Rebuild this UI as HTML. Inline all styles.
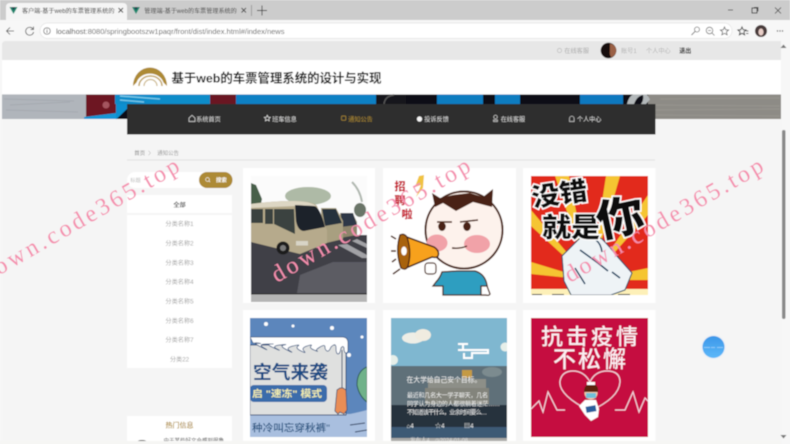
<!DOCTYPE html>
<html lang="zh"><head><meta charset="utf-8"><title>基于web的车票管理系统</title>
<style>
html,body{margin:0;padding:0;width:790px;height:444px;overflow:hidden;background:#f7f7f7}
svg{position:absolute;left:0;top:0;display:block}
text{font-family:"Liberation Sans","Noto Sans CJK SC",sans-serif}
.b{font-weight:700}
</style></head><body>
<svg width="790" height="444" viewBox="0 0 790 444" xmlns="http://www.w3.org/2000/svg">
<defs><filter id="bl" x="-5%" y="-5%" width="110%" height="110%"><feGaussianBlur stdDeviation="0.42"/></filter>
<linearGradient id="ball" x1="0" y1="0" x2="0" y2="1"><stop offset="0" stop-color="#3c97e8"/><stop offset="1" stop-color="#5cb8fa"/></linearGradient>
<clipPath id="c1"><rect x="251" y="176" width="116" height="126"/></clipPath>
<clipPath id="c3"><rect x="531" y="176" width="117" height="119"/></clipPath>
<clipPath id="c4"><rect x="250" y="318" width="117" height="119"/></clipPath>
<clipPath id="c5"><rect x="391" y="318" width="116" height="123"/></clipPath>
<clipPath id="c6"><rect x="531" y="318" width="117" height="119"/></clipPath>
<clipPath id="t1"><rect x="20" y="3" width="95" height="17"/></clipPath>
<clipPath id="t2"><rect x="142" y="3" width="95" height="17"/></clipPath>
</defs>
<g filter="url(#bl)">
<!-- browser chrome -->
<rect width="790" height="444" fill="#f7f7f7"/>
<rect width="790" height="20" fill="#cccccc"/>
<path d="M6 20V7q0-4 4-4h113q4 0 4 4v13z" fill="#f5f5f5"/>
<path d="M9.500 7h8l-4 7z" fill="#1f8a70"/><path d="M11.500 7h4l-2 3.500z" fill="#26424f"/>
<text x="22" y="12.800" font-size="6.100" fill="#333" clip-path="url(#t1)">客户端-基于web的车票管理系统的设计</text>
<path d="M118.500 8l4.500 4.500m0-4.500l-4.500 4.500" stroke="#333" stroke-width=".9"/>
<path d="M132 7h8l-4 7z" fill="#1f8a70"/><path d="M134 7h4l-2 3.500z" fill="#26424f"/>
<text x="144.300" y="12.800" font-size="6.100" fill="#444" clip-path="url(#t2)">管理端-基于web的车票管理系统的设计</text>
<path d="M241.500 8l4.500 4.500m0-4.500l-4.500 4.500" stroke="#444" stroke-width=".9"/>
<path d="M251.500 5v11" stroke="#888" stroke-width=".7"/>
<path d="M257 10.500h10M262 5.500v10" stroke="#444" stroke-width=".9"/>
<path d="M728 10h5" stroke="#444" stroke-width=".8"/>
<rect x="752" y="8" width="5" height="5" fill="none" stroke="#333" stroke-width=".9"/><path d="M754 7.500h4v4" fill="none" stroke="#333" stroke-width=".7"/>
<path d="M775 7.500l6 6m0-6l-6 6" stroke="#444" stroke-width=".8"/>
<path d="M14 31h-7m3-3.500l-3.500 3.500 3.500 3.500" fill="none" stroke="#555" stroke-width=".8"/>
<path d="M33 29a4 4 0 1 0 .6 3M33.500 26.500v3h-3" fill="none" stroke="#555" stroke-width=".8"/>
<rect x="40" y="23" width="692" height="15.500" rx="7.700" fill="#fff" stroke="#e4e4e4" stroke-width=".7"/>
<circle cx="47" cy="31" r="3.300" fill="none" stroke="#555" stroke-width=".7"/><path d="M47 30v3M47 28.800v.7" stroke="#555" stroke-width=".7"/>
<text x="56" y="33.800" font-size="7.500" fill="#666"><tspan fill="#444">localhost</tspan>:8080/springbootszw1paqr/front/dist/index.html#/index/news</text>
<circle cx="697" cy="29.500" r="2.500" fill="none" stroke="#777" stroke-width=".8"/><path d="M695.200 31.300l-3.700 3.700" stroke="#777" stroke-width=".9"/>
<circle cx="709.500" cy="30.500" r="3.300" fill="none" stroke="#777" stroke-width=".8"/><path d="M712 33l2.500 2.500M708 30.500h3" stroke="#777" stroke-width=".8"/>
<path d="M724.500 27l1.200 2.700 2.900.3-2.200 1.900.7 2.900-2.600-1.500-2.600 1.500.7-2.900-2.200-1.900 2.900-.3z" fill="none" stroke="#666" stroke-width=".8"/>
<path d="M742 27l1.200 2.700 2.900.3-2.200 1.900.7 2.900-2.600-1.500-2.600 1.500.7-2.900-2.200-1.900 2.900-.3z" fill="none" stroke="#333" stroke-width=".9"/><path d="M746 31h2.500M746 33.500h2.500" stroke="#333" stroke-width=".7"/>
<circle cx="761" cy="31" r="6" fill="#4a3a3a"/><ellipse cx="761" cy="32" rx="2.500" ry="3.500" fill="#e9cfc8"/>
<circle cx="777.500" cy="31" r=".7" fill="#555"/><circle cx="780" cy="31" r=".7" fill="#555"/><circle cx="782.500" cy="31" r=".7" fill="#555"/>

<!-- page -->
<path d="M2 444V45q0-4 4-4h775v403z" fill="#f5f5f5"/>
<path d="M2 60V45q0-4 4-4h775v19z" fill="#e7e7e7"/>
<rect x="2" y="60" width="779" height="34" fill="#fff"/>
<circle cx="559.500" cy="50.500" r="2.100" fill="none" stroke="#bbb" stroke-width=".7"/>
<text x="564.300" y="52.800" font-size="6.200" fill="#aaa">在线客服</text>
<circle cx="608.500" cy="50.500" r="7.800" fill="#120a08"/><path d="M610 43.500q6.500 1.500 6.300 7.500 0 4-5 6.500-2-3-1.500-6z" fill="#9a6044"/>
<text x="621" y="52.800" font-size="6.200" fill="#b5b5b5">账号1</text>
<text x="646" y="52.800" font-size="6.200" fill="#b5b5b5">个人中心</text>
<text x="679.300" y="52.800" font-size="6" fill="#222" class="b">退出</text>
<!-- logo -->
<path d="M133 86A17 18.500 0 0 1 167 86L163.500 82.500A14 12 0 0 0 136.500 82.500z" fill="#ad8a35"/>
<path d="M139 86a11.500 10 0 0 1 23 0" fill="none" stroke="#c2a565" stroke-width="1.500"/>
<path d="M144 86a6.500 6.500 0 0 1 13 0" fill="none" stroke="#cdb98c" stroke-width="1.200"/>
<text x="171.500" y="82.500" font-size="12.400" fill="#1a1a1a" font-weight="700">基于web的车票管理系统的设计与实现</text>

<!-- banner -->
<rect x="2" y="94.500" width="779" height="24.500" fill="#0a0d12"/>
<rect x="2" y="94.500" width="84" height="24.500" fill="#b0b5bb"/>
<path d="M4 99l70 2M10 105l60-3M6 110l72 2" stroke="#8e949c" stroke-width="1" opacity=".35"/>
<rect x="86" y="94.500" width="30" height="24" fill="#6d1620"/><circle cx="106" cy="105" r="3.500" fill="#a4555e"/>
<path d="M116 94.500h26l-26 25z" fill="#0f8fcf"/><path d="M84 117l32-4v6H84z" fill="#1496d6"/>
<rect x="115" y="94.500" width="95" height="9.500" fill="#0f8cc9"/>
<path d="M120 96l40 3M120 100l24 2" stroke="#7fcdeb" stroke-width="1.200"/>
<rect x="210" y="94.500" width="26" height="9.500" fill="#6b1520"/>
<rect x="236" y="94.500" width="140" height="9.500" fill="#0f80c4"/>
<rect x="376" y="94.500" width="30" height="9.500" fill="#15171c"/><path d="M384 104q1-8 10-9" fill="none" stroke="#555" stroke-width="1.500"/>
<rect x="437" y="94.500" width="46" height="9.500" fill="#0f7cc0"/>
<rect x="495" y="94.500" width="25" height="9.500" fill="#0f7cc0"/>
<rect x="580" y="94.500" width="43" height="9.500" fill="#0f78bf"/>
<rect x="648" y="94.500" width="133" height="24.500" fill="#8d8b86"/>
<path d="M627 104q2-8 6-9.500h14l3 5-4 4.500h-5q3-4 2-9-6 1-9 9z" fill="#b3b8ba"/>
<path d="M660 99l120-1M655 105l125 1M655 110l125-1M655 115l125 1" stroke="#a5a39e" stroke-width="1" opacity=".4"/>

<!-- nav -->
<rect x="127" y="104" width="528.500" height="30.500" fill="#2f2f2d"/>
<g font-size="6.100">
<path d="M189 121.500v-3.500l3-2.700 3 2.700v3.500z" fill="none" stroke="#ddd" stroke-width=".7"/>
<text x="196.300" y="121.300" fill="#dedede">系统首页</text>
<path d="M267.300 115.300l.9 1.900 2.100.2-1.500 1.400.4 2-1.900-1-1.900 1 .4-2-1.500-1.400 2.100-.2z" fill="none" stroke="#ddd" stroke-width=".7"/>
<text x="272.300" y="121.300" fill="#dedede">班车信息</text>
<rect x="341.500" y="116" width="4.300" height="4.300" rx=".8" fill="none" stroke="#ad8a35" stroke-width=".7"/>
<text x="348.300" y="121.300" fill="#ad8a35">通知公告</text>
<circle cx="419.500" cy="119" r="2.600" fill="#f5f5f5"/>
<text x="424.300" y="121.300" fill="#dedede">投诉反馈</text>
<circle cx="495.500" cy="117" r="1.800" fill="none" stroke="#ccc" stroke-width=".7"/><path d="M493.500 121.500v-1.500h4v1.500z" fill="none" stroke="#ccc" stroke-width=".7"/>
<text x="500.700" y="121.300" fill="#dedede">在线客服</text>
<path d="M569.500 121.500v-3a2.300 2.300 0 0 1 4.600 0v3z" fill="none" stroke="#ccc" stroke-width=".7"/>
<text x="577" y="121.300" fill="#dedede">个人中心</text>
</g>

<!-- breadcrumb -->
<text x="134.300" y="154.800" font-size="5.400" fill="#888">首页</text>
<path d="M148.500 150.800l2 2.200-2 2.200" fill="none" stroke="#999" stroke-width=".5"/>
<text x="157.300" y="154.800" font-size="5.400" fill="#999">通知公告</text>
<rect x="127" y="159.500" width="528" height="1" fill="#e2e2e2"/>

<!-- sidebar -->
<rect x="127" y="172" width="105" height="16" rx="8" fill="#fff"/>
<text x="130.300" y="181.800" font-size="5.200" fill="#bbb">标题</text>
<rect x="199" y="172" width="33.500" height="16" rx="8" fill="#ad8a35"/>
<circle cx="207.500" cy="179.500" r="1.900" fill="none" stroke="#fff" stroke-width=".6"/><path d="M209 181l1 1" stroke="#fff" stroke-width=".6"/>
<text x="216" y="181.800" font-size="5.400" fill="#fff" class="b">搜索</text>
<rect x="127" y="195" width="105" height="18" fill="#fff"/>
<text x="179.500" y="206.800" font-size="6.200" fill="#333" text-anchor="middle" font-weight="500">全部</text>
<rect x="127" y="215" width="105" height="153" fill="#fff"/>
<g font-size="6.200" fill="#a3a3a3" text-anchor="middle">
<text x="179.500" y="226">分类名称1</text><text x="179.500" y="245.500">分类名称2</text><text x="179.500" y="264.800">分类名称3</text><text x="179.500" y="284.200">分类名称4</text><text x="179.500" y="303.500">分类名称5</text><text x="179.500" y="322.800">分类名称6</text><text x="179.500" y="342.200">分类名称7</text><text x="179.500" y="361.500">分类22</text>
</g>
<rect x="127" y="416" width="105" height="25" fill="#fff"/>
<text x="179.500" y="427.500" font-size="7" fill="#ad8a35" text-anchor="middle" font-weight="500">热门信息</text>
<text x="163.500" y="442.500" font-size="5.500" fill="#444">由于某些好文会感到很鲁</text>
<ellipse cx="142" cy="442" rx="5" ry="2" fill="#444"/>

<!-- cards -->
<g fill="#fff">
<rect x="243" y="168" width="132" height="135"/><rect x="383" y="168" width="133" height="135"/><rect x="523" y="168" width="132.500" height="135"/>
<rect x="243" y="310" width="132" height="131"/><rect x="383" y="310" width="133" height="131"/><rect x="523" y="310" width="132.500" height="131"/>
</g>

<!-- card 1: bus -->
<g clip-path="url(#c1)">
<rect x="251" y="176" width="116" height="126" fill="#fbfbfb"/>
<path d="M251 183l5 2 6 14-2 9h-9z" fill="#465f48"/>
<ellipse cx="308" cy="196" rx="23" ry="9" fill="#aebaa6"/>
<path d="M352 182q8 8 10 20" fill="none" stroke="#b0b8b0" stroke-width="2"/><ellipse cx="360" cy="210" rx="6" ry="7" fill="#6a7468"/>
<rect x="251" y="235" width="116" height="58.500" fill="#414147"/>
<path d="M297 293l3-18 33-13h34v31z" fill="#5c5c64"/>
<path d="M338 245l24 13h5v-3l-20-11zM352 241l15 7v-4l-10-5z" fill="#a2a2a6"/>
<path d="M340 213h13l1 3 3 6v13l-17 3z" fill="#8f866c"/><path d="M341 213h12l4 12-16 2z" fill="#2d3947"/>
<path d="M321 208h15l7 13v18l-21 5z" fill="#a89f80"/><path d="M322 209h14l6 14-17 3z" fill="#28313c"/>
<path d="M251 204q20-3 42-3 20 0 24 5l10 24v13l-27 11-49-12z" fill="#b6aa8c"/>
<path d="M251 204q22-3 42-3 18 0 23 5l-20 0-45 2z" fill="#ddd6c3"/>
<path d="M251 209h12v14h-12zM265 209h8v15h-8zM274 209h20l1 25-21-10z" fill="#3a423f"/>
<path d="M295 205l19 1q6 1 11 21l-21 4q-6 0-8-10z" fill="#1c232c"/>
<circle cx="283" cy="248" r="6.500" fill="#1b1b1d"/><circle cx="283" cy="248" r="3" fill="#7a7a7a"/>
<rect x="296" y="241" width="12" height="4.500" fill="#d8d4c6"/>
<rect x="251" y="293.500" width="116" height="1" fill="#222"/>
<rect x="251" y="294.500" width="116" height="7.500" fill="#b5b5b5"/>
</g>

<!-- card 2: cartoon -->
<g>
<g fill="#c6192b" font-weight="900" text-anchor="middle">
<text x="400" y="190" font-size="11">招</text><text x="400" y="204" font-size="11">聘</text><text x="407" y="218" font-size="11">啦</text>
</g>
<path d="M419 176l5-1-1 13-7 9 5-12-6 2z" fill="#f0c341"/>
<circle cx="464" cy="230" r="38.500" fill="#fdf2ec" stroke="#4a2412" stroke-width="2"/>
<path d="M432 193l8 5 13-3 17-2 13 4 10-8-1 18-19-5-17 9-13-8-8 4z" fill="#4a2412"/>
<ellipse cx="437" cy="243" rx="10.500" ry="8.500" fill="#f1a2a8"/>
<ellipse cx="477" cy="244" rx="13" ry="9" fill="#f1a2a8"/>
<path d="M437 222h15M460 222l18-2" stroke="#4a2412" stroke-width="1.600"/>
<ellipse cx="442" cy="226.500" rx="3.800" ry="4.500" fill="#4a2412"/><ellipse cx="467" cy="226.500" rx="3.800" ry="4.500" fill="#4a2412"/>
<path d="M452 248q8 1 15-2" fill="none" stroke="#4a2412" stroke-width="1.400"/>
<path d="M442 272q-2 6-6 10l-3 4 10 0 0 9h45l-1-10q-2-11-12-14l-18 0z" fill="#2f9ec0" stroke="#4a2412" stroke-width="1.300"/>
<path d="M481 295v-9h6l3 8q-1 2-4 1z" fill="#fff" stroke="#4a2412" stroke-width="1.300"/>
<path d="M404 236l30 11q6 4 4 9-1 2-6 1l-26 11z" fill="#f7a11e" stroke="#4a2412" stroke-width="1.500"/>
<path d="M400 235q-5 16 1 33 5 3 7-2 4-14-1-29-3-4-7-2z" fill="#a8620f" stroke="#4a2412" stroke-width="1.300"/>
<ellipse cx="404" cy="251" rx="2.800" ry="4.500" fill="#fff"/>
<rect x="425" y="263" width="11" height="11" rx="3" fill="#fff" stroke="#4a2412" stroke-width="1.200"/>
<path d="M391 236l5 3M391 251h5M392 262l4-3M393 274l7-5" stroke="#4a2412" stroke-width="1.500"/>
</g>

<!-- card 3 -->
<g clip-path="url(#c3)">
<rect x="531" y="176" width="117" height="119" fill="#e22c1d"/>
<path d="M590 280L555 176h14zM590 280L606 176h14zM590 280L531 210v16zM590 280L531 262v12zM590 280L648 268v12zM590 280L648 215v-20z" fill="#f5c531"/>
<rect x="531" y="289" width="117" height="6" fill="#fdf0b8"/>
<path d="M532 295h10M552 295h12M618 295h12" stroke="#111" stroke-width="2"/>
<path d="M562 256l18-18q12-5 22 1 8 8 14 16l16 18-7 17-14 5h-40l-7-14z" fill="#eef3f6" stroke="#0c3a5c" stroke-width="1"/>
<path d="M580 250l18 13 10 8M596 240q5 4 6 12M612 272l8 6M575 268l10 16" fill="none" stroke="#0c3a5c" stroke-width="1.500"/>
<g font-weight="900" fill="#111" stroke="#fff" stroke-width="3" paint-order="stroke" style="font-family:'Noto Sans CJK SC',sans-serif">
<text x="533" y="207" font-size="26" textLength="56" lengthAdjust="spacingAndGlyphs" transform="rotate(-8 533 207)">没错</text>
<text x="542" y="237" font-size="27" textLength="58" lengthAdjust="spacingAndGlyphs">就是</text>
<text x="600" y="238" font-size="44" textLength="48" lengthAdjust="spacingAndGlyphs" transform="rotate(-12 600 238)">你</text>
</g>
</g>

<!-- card 4 -->
<g clip-path="url(#c4)">
<rect x="250" y="318" width="117" height="119" fill="#5c86bc"/>
<path d="M250 414h100q10-2 17-4v27H250z" fill="#a9bfdf"/>
<rect x="250" y="345" width="96" height="70" fill="#dfe0df" stroke="#34507a" stroke-width="1"/>
<path d="M250 337h92q6 0 6 6v7q0 3-2 3t-2-5q-1-3-3 0-1 6-3 6t-2-6-5-1q-2 5-4 4t-2-4-5 0-3 4-3-1-3-4-4 0-3 5-3 0-3-5-5 0-3 5-3-1-3-5-4 0-3 4-3-1-3-4-4 0-3 4-3-1-3-4-5 0z" fill="#fff" stroke="#3a5680" stroke-width=".8"/>
<text x="253" y="379" font-size="18.500" fill="#1d4c84" font-weight="700" textLength="75" lengthAdjust="spacingAndGlyphs">空气来袭</text>
<rect x="250" y="385" width="77" height="17" rx="4" fill="#3a6cab"/>
<text x="252" y="397" font-size="9.500" fill="#f1ecae" font-weight="700" textLength="70" lengthAdjust="spacingAndGlyphs">启 "速冻" 模式</text>
<text x="252" y="431.500" font-size="10" fill="#25527f" font-weight="500" textLength="78" lengthAdjust="spacingAndGlyphs">种冷叫忘穿秋裤"</text>
<path d="M337 390l3-2h3l3 2 1 20-3 4-4-2-2 2-3-3z" fill="#e98d55" stroke="#3a4d6e" stroke-width=".8"/>
<path d="M342 350v38" stroke="#3a4d6e" stroke-width="1"/>
<path d="M357 385q0-14 10-18v35q-8-6-10-17z" fill="#6fb28a" stroke="#2f5a54"/>
<g fill="#fff"><circle cx="266" cy="324" r="2"/><circle cx="293" cy="326" r="1.500"/><circle cx="332" cy="328" r="2"/><circle cx="362" cy="337" r="1.500"/><circle cx="349" cy="355" r="2"/></g>
<path d="M350 425l15-2M355 432l12-2" stroke="#2d3f5e" stroke-width="1"/>
</g>

<!-- card 5 -->
<g clip-path="url(#c5)">
<rect x="391" y="318" width="116" height="123" fill="#7fb7d0"/>
<ellipse cx="413" cy="338" rx="11" ry="5.500" fill="#eeeee6"/><ellipse cx="423" cy="335" rx="8" ry="6" fill="#f0ece0"/>
<path d="M458 344h10M463 344v6M458 350h30v3h-16v5h-8v-5" stroke="#fff" stroke-width="2" fill="none"/>
<circle cx="505" cy="347" r="4.500" fill="#e7efe9"/><circle cx="393" cy="360" r="5" fill="#e7efe9"/>
<rect x="391" y="366" width="116" height="39" fill="#5e7079"/>
<ellipse cx="492" cy="372" rx="10" ry="5" fill="#7c8b8f"/>
<rect x="462" y="370" width="10" height="8" fill="#c49a45"/>
<rect x="428" y="379" width="58" height="10" fill="#8d8f88"/>
<rect x="425" y="388" width="64" height="16" fill="#83847b"/>
<rect x="391" y="405" width="116" height="22" fill="#27333d"/>
<path d="M391 427h116v11H391z" fill="#3c5a74"/>
<rect x="391" y="438" width="116" height="3" fill="#a9a9a6"/>
<g fill="#f2f2f2">
<text x="406.500" y="382" font-size="6.800">在大学给自己安个目标。</text>
<text x="407" y="397.500" font-size="6" textLength="81">最近和几名大一学子聊天，几名</text>
<text x="407" y="405.800" font-size="6" textLength="93">同学认为身边的人都很躺着迷茫……</text>
<text x="407" y="414.500" font-size="6" textLength="80">不知道该干什么，业余时间要么…</text>
<text x="406.500" y="428" font-size="6.200">⌂4</text><text x="435" y="428" font-size="6.200">☆4</text><text x="464" y="428" font-size="6.200">▤4</text>
</g>
<text x="410" y="442" font-size="5.500" fill="#dedede">发布人4　◷2024-01-08</text>
</g>

<!-- card 6 -->
<g clip-path="url(#c6)">
<rect x="531" y="318" width="117" height="119" fill="#c50b3f"/>
<g fill="#fbeef2" font-weight="500" style="font-family:'Noto Sans CJK SC',sans-serif">
<text x="541" y="344.500" font-size="22" textLength="97" lengthAdjust="spacing">抗击疫情</text>
<text x="553" y="367" font-size="23" textLength="73" lengthAdjust="spacing">不松懈</text>
</g>
<path d="M531 409l8-8 4 11 5-20 9 18h8M615 410h10l8-18 6 20 6-14 4 4" fill="none" stroke="#f4d4de" stroke-width="1.200"/>
<path d="M590 411q-32-16-30-30 2-10 13-10 11 0 17 11 5-11 17-11 13 0 13 11-1 16-30 29z" fill="none" stroke="#f4d4de" stroke-width="1.200"/>
<circle cx="591" cy="393" r="6.500" fill="#f4c7a8"/><path d="M584 392q0-8 7-8 8 0 7 8z" fill="#5b2411"/><rect x="587" y="382" width="8" height="3" fill="#fff"/>
<rect x="586" y="393" width="10" height="5" fill="#6fc0d8"/>
<path d="M585 400h11l3 9-1 8-7 4-6-6-6-9z" fill="#fff"/><rect x="586" y="406" width="10" height="6" fill="#2a5d9c" transform="rotate(-10 591 409)"/>
</g>

<!-- watermarks -->
<g fill="#f48fae" font-size="24" letter-spacing="3.200">
<text transform="translate(-14 283) rotate(-30)" style="font-family:'Liberation Serif',serif">down.code365.top</text>
<text transform="translate(277 283) rotate(-30)" style="font-family:'Liberation Serif',serif">down.code365.top</text>
<text transform="translate(570 283) rotate(-30)" style="font-family:'Liberation Serif',serif">down.code365.top</text>
</g>

<!-- floating ball -->
<circle cx="713.500" cy="347" r="12.500" fill="#eef2f6"/>
<circle cx="713.500" cy="347" r="11" fill="url(#ball)"/>
<path d="M704 347.500h6M717 347.500h6M711 347.500h4" stroke="#cfe8fb" stroke-width=".6"/>

<!-- bottom strip + scrollbar -->
<rect x="0" y="441" width="781" height="3" fill="#f6f6f4"/>
<rect x="781" y="41" width="9" height="403" fill="#f7f7f7"/>
<rect x="782" y="130" width="3.500" height="189" rx="1.700" fill="#8a8a8a"/>
<path d="M783.500 44.500l3 3.500h-6z" fill="#777"/>
<path d="M783.500 438.500l3-3.500h-6z" fill="#777"/>
</g>
</svg>
</body></html>
